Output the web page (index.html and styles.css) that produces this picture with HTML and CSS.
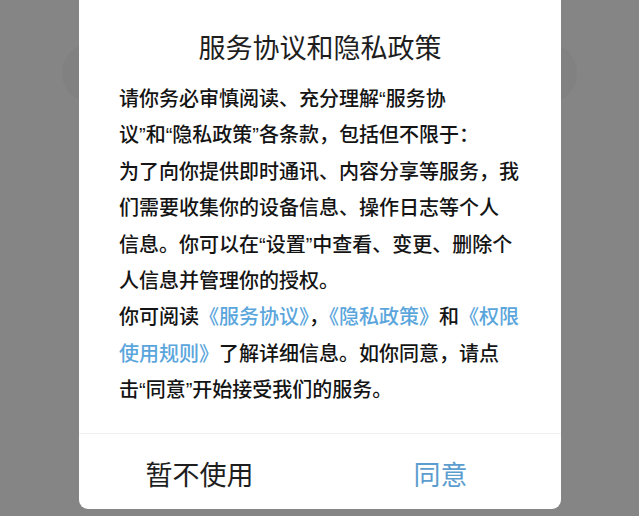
FILE: index.html
```html
<!DOCTYPE html>
<html lang="zh-CN">
<head>
<meta charset="utf-8">
<title>服务协议和隐私政策</title>
<link rel="stylesheet" href="styles.css">
</head>
<body>
<div class="page">
  <div class="backdrop-bar"></div>
</div>
<div class="dialog">
  <h1 class="title">服务协议和隐私政策</h1>
  <div class="content">
    <p class="para">请你务必审慎阅读、充分理解“服务协<br>议”和“隐私政策”各条款，包括但不限于：</p>
    <p class="para">为了向你提供即时通讯、内容分享等服务，我<br>们需要收集你的设备信息、操作日志等个人<br>信息。你可以在“设置”中查看、变更、删除个<br>人信息并管理你的授权。</p>
    <p class="para">你可阅读<span class="link">《服务协议》</span>，<span class="link">《隐私政策》</span>和<span class="link">《权限<br>使用规则》</span>了解详细信息。如你同意，请点<br>击“同意”开始接受我们的服务。</p>
  </div>
  <div class="actions">
    <div class="btn btn-cancel">暂不使用</div>
    <div class="btn btn-ok">同意</div>
  </div>
</div>
</body>
</html>
```

FILE: styles.css
```css
html, body {
  margin: 0;
  padding: 0;
}
body {
  width: 639px;
  height: 516px;
  overflow: hidden;
  background: #858585;
  font-family: "Liberation Sans", "Noto Sans CJK SC", sans-serif;
  position: relative;
}
.page {
  padding: 43px 62px 0;
}
.backdrop-bar {
  height: 60px;
  border-radius: 30px;
  background: #818181;
}
.dialog {
  position: absolute;
  top: 0;
  left: 79px;
  width: 482px;
  height: 509px;
  background: #ffffff;
  border-radius: 0 0 9px 9px;
  display: flex;
  flex-direction: column;
}
.title {
  margin: 0;
  padding-top: 30px;
  font-size: 27px;
  line-height: 38px;
  font-weight: 400;
  color: #1e1e1e;
  text-align: center;
}
.content {
  padding: 13px 0 0 40px;
  height: 339px;
  box-sizing: border-box;
}
.para {
  margin: 0;
  font-size: 20px;
  line-height: 36.4px;
  color: #141414;
  font-weight: 500;
  white-space: nowrap;
}
.link {
  color: #5aa6dc;
}
.actions {
  margin-top: 26px;
  border-top: 1px solid #efefef;
  flex: 1;
  display: flex;
}
.btn {
  flex: 1;
  display: flex;
  align-items: center;
  justify-content: center;
  font-size: 27px;
  padding-top: 4px;
}
.btn-cancel {
  color: #1e1e1e;
}
.btn-ok {
  color: #5c9dcf;
}
```
